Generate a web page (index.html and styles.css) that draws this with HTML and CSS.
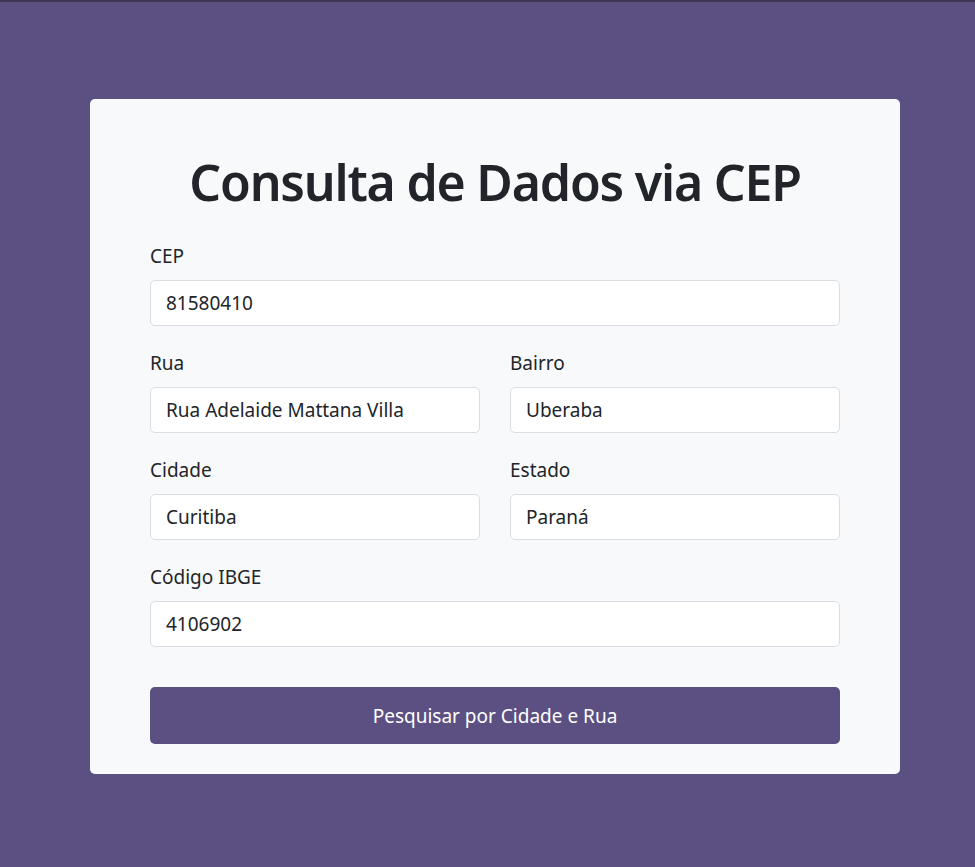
FILE: index.html
```html
<!DOCTYPE html>
<html lang="pt-BR">
<head>
<meta charset="utf-8">
<title>Consulta de Dados via CEP</title>
<link rel="stylesheet" href="styles.css">
</head>
<body class="page">
  <main class="card">
    <h1 class="title">Consulta de Dados via CEP</h1>
    <form class="form">
      <div class="group">
        <label class="label" for="cep">CEP</label>
        <input class="input" id="cep" type="text" value="81580410">
      </div>
      <div class="row">
        <div class="group">
          <label class="label" for="rua">Rua</label>
          <input class="input" id="rua" type="text" value="Rua Adelaide Mattana Villa">
        </div>
        <div class="group">
          <label class="label" for="bairro">Bairro</label>
          <input class="input" id="bairro" type="text" value="Uberaba">
        </div>
      </div>
      <div class="row">
        <div class="group">
          <label class="label" for="cidade">Cidade</label>
          <input class="input" id="cidade" type="text" value="Curitiba">
        </div>
        <div class="group">
          <label class="label" for="estado">Estado</label>
          <input class="input" id="estado" type="text" value="Paraná">
        </div>
      </div>
      <div class="group">
        <label class="label" for="ibge">Código IBGE</label>
        <input class="input" id="ibge" type="text" value="4106902">
      </div>
      <button class="button" type="button">Pesquisar por Cidade e Rua</button>
    </form>
  </main>
</body>
</html>
```
FILE: styles.css
```css
* { box-sizing: border-box; }
html, body { margin: 0; padding: 0; }
.page {
  background: #5c5082;
  border-top: 2px solid #3e3654;
  min-height: 867px;
  font-family: "Noto Sans", "Open Sans", sans-serif;
  color: #212529;
  padding-top: 97px;
}
.card {
  width: 810px;
  margin-left: 90px;
  background: #f8f9fa;
  border-radius: 5px;
  padding: 53px 60px 30px;
}
.title {
  margin: 0 0 30px;
  text-align: center;
  font-size: 50px;
  font-weight: 600;
  letter-spacing: -1.2px;
  line-height: 60px;
  color: #212529;
}
.form { display: flex; flex-direction: column; }
.row {
  display: grid;
  grid-template-columns: 1fr 1fr;
  column-gap: 30px;
}
.group { margin-bottom: 23px; display: flex; flex-direction: column; }
.label {
  font-size: 19px;
  line-height: 28px;
  margin-bottom: 10px;
}
.input {
  height: 46px;
  padding: 0 15px;
  font: inherit;
  font-size: 19px;
  color: #212529;
  background: #fff;
  border: 1px solid #dadee3;
  border-radius: 5px;
}
.button {
  margin-top: 17px;
  height: 57px;
  border: 0;
  border-radius: 5px;
  background: #5c5082;
  color: #fff;
  font: inherit;
  font-size: 19px;
}
```
